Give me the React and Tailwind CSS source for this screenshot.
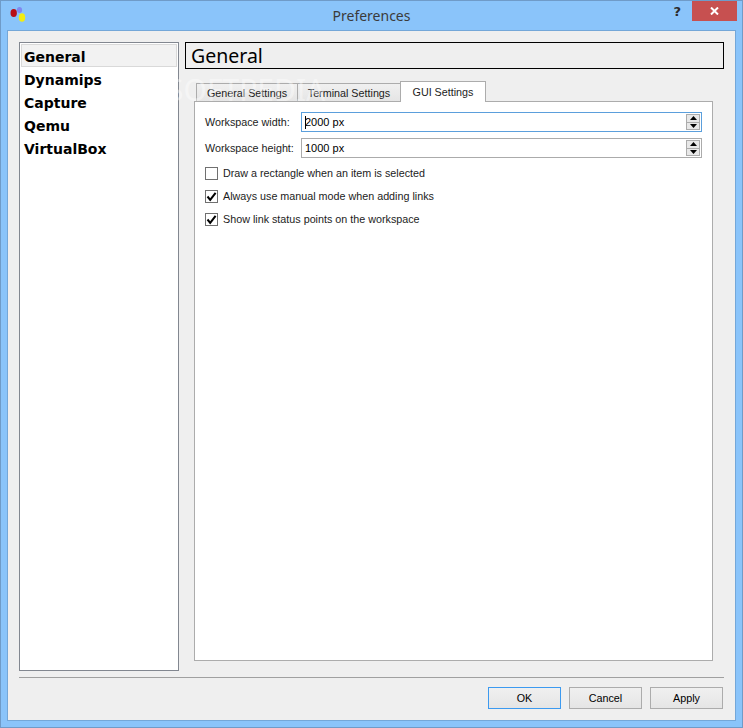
import React from "react";

const sidebarItems = ["General", "Dynamips", "Capture", "Qemu", "VirtualBox"];

const SpinBox = ({ value, focused }) => (
  <div
    className={`flex h-5 items-center border bg-white pl-[3px] pr-[1px] ${
      focused ? "border-[#5b9fdc]" : "border-[#ababab]"
    }`}
  >
    {focused && <span className="h-[13px] w-px bg-black" />}
    <span className={`flex-1 pt-px text-[11px] leading-none text-black ${focused ? "-ml-px" : ""}`}>
      {value}
    </span>
    <div className="flex w-[14px] flex-col gap-0 self-stretch py-px">
      <div className="flex flex-1 items-center justify-center border border-[#acacac] bg-[#e8e8e8]">
        <svg width="7" height="4" viewBox="0 0 7 4">
          <path d="M3.5 0 7 4H0z" fill="#000" />
        </svg>
      </div>
      <div className="flex flex-1 items-center justify-center border border-t-0 border-[#acacac] bg-[#e8e8e8]">
        <svg width="7" height="4" viewBox="0 0 7 4">
          <path d="M0 0h7L3.5 4z" fill="#000" />
        </svg>
      </div>
    </div>
  </div>
);

const CheckRow = ({ label, checked }) => (
  <div className="flex h-[13px] items-center gap-[5px]">
    <div className="flex h-[13px] w-[13px] items-center justify-center border border-[#707070] bg-white">
      {checked && (
        <svg width="11" height="11" viewBox="0 0 11 11">
          <path d="M1.5 5.5 4.2 8.8 9.6 1.8" fill="none" stroke="#000" strokeWidth="2" />
        </svg>
      )}
    </div>
    <span className="text-[10.75px] leading-none text-[#1c1c1c]">{label}</span>
  </div>
);

const DialogButton = ({ label, active }) => (
  <button
    className={`h-[22px] w-[73px] border bg-gradient-to-b from-[#f0f0f0] to-[#e5e5e5] text-[10.75px] text-black ${
      active ? "border-[#3c9af0]" : "border-[#acacac]"
    }`}
  >
    {label}
  </button>
);

export default function App() {
  return (
    <div
      className="relative flex h-[728px] w-[743px] flex-col overflow-hidden border border-[#6f9bc8] bg-[#8ac4fa] px-[6px] pb-[6px]"
      style={{ fontFamily: '"Liberation Sans", sans-serif' }}
    >
      {/* title bar */}
      <div className="relative flex h-[29px] shrink-0 items-center">
        <svg className="absolute left-[3px] top-[5px]" width="17" height="17" viewBox="0 0 17 17">
          <ellipse cx="9.5" cy="4" rx="2.6" ry="3" fill="#8088f0" />
          <ellipse cx="3.7" cy="7" rx="3.2" ry="4" fill="#b80f16" />
          <ellipse cx="12" cy="11.5" rx="3.2" ry="4.3" fill="#f2ec10" />
        </svg>
        <span
          className="flex-1 text-center text-[14px] text-[#3b3b3b]"
          style={{ fontFamily: '"Noto Sans", sans-serif' }}
        >
          Preferences
        </span>
        <span
          className="absolute right-[55px] top-[3px] text-[13px] font-bold leading-4 text-[#2b2b2b]"
          style={{ fontFamily: '"DejaVu Sans", sans-serif' }}
        >
          ?
        </span>
        <div className="absolute right-[-1px] top-0 flex h-[20px] w-[45px] items-center justify-center bg-[#c75050]">
          <svg width="9" height="8" viewBox="0 0 9 8">
            <path d="M1 .5 8 7.5M8 .5 1 7.5" stroke="#fff" strokeWidth="2" fill="none" />
          </svg>
        </div>
      </div>

      {/* client area */}
      <div className="flex min-h-0 flex-1 flex-col border border-[#74a7d8] bg-[#efefef] px-[11px] pb-[11px] pt-[11px]">
        <div className="flex min-h-0 flex-1 gap-[6px]">
          <div className="flex h-[629px] w-[160px] shrink-0 flex-col border border-[#828790] bg-white p-px">
            {sidebarItems.map((item, i) => (
              <div
                key={item}
                className={`flex h-[23px] items-center pt-[2px] text-[14px] font-bold leading-none text-black ${
                  i === 0 ? "border border-[#d9d9d9] bg-[#f2f2f2] pl-[2px]" : "pl-[3px]"
                }`}
                style={{ fontFamily: '"DejaVu Sans", sans-serif' }}
              >
                {item}
              </div>
            ))}
          </div>

          <div className="flex min-w-0 flex-1 flex-col">
            <div
              className="flex h-[27px] items-center border border-black px-[5px] text-[19.5px] leading-none text-black"
              style={{ fontFamily: '"Noto Sans", sans-serif' }}
            >
              General
            </div>
            <div className="mt-[12px] flex h-[20px] items-end pl-[11px]">
              <div className="flex h-[18px] w-[102px] items-center justify-center border border-b-0 border-[#acacac] bg-gradient-to-b from-[#f0f0f0] to-[#e5e5e5] pt-px text-[10.75px] leading-none text-[#1c1c1c]">
                General Settings
              </div>
              <div className="-ml-px flex h-[18px] w-[104px] items-center justify-center border border-b-0 border-[#acacac] bg-gradient-to-b from-[#f0f0f0] to-[#e5e5e5] pt-px text-[10.75px] leading-none text-[#1c1c1c]">
                Terminal Settings
              </div>
              <div className="relative z-10 -mb-px -ml-px flex h-[21px] w-[86px] items-center justify-center border border-b-0 border-[#acacac] bg-white text-[10.75px] leading-none text-[#1c1c1c]">
                GUI Settings
              </div>
            </div>
            <div className="ml-[9px] mr-[11px] flex h-[560px] flex-col border border-[#acacac] bg-white px-[10px] pt-[10px]">
              <div className="flex flex-col gap-[6px]">
                <div className="flex items-center">
                  <span className="w-[96px] pt-px text-[10.75px] leading-none text-[#1c1c1c]">Workspace width:</span>
                  <div className="flex-1">
                    <SpinBox value="2000 px" focused />
                  </div>
                </div>
                <div className="flex items-center">
                  <span className="w-[96px] pt-px text-[10.75px] leading-none text-[#1c1c1c]">Workspace height:</span>
                  <div className="flex-1">
                    <SpinBox value="1000 px" />
                  </div>
                </div>
              </div>
              <div className="mt-[9px] flex flex-col gap-[10px]">
                <CheckRow label="Draw a rectangle when an item is selected" />
                <CheckRow label="Always use manual mode when adding links" checked />
                <CheckRow label="Show link status points on the workspace" checked />
              </div>
            </div>
          </div>
        </div>

        {/* footer */}
        <div className="h-px shrink-0 bg-[#a0a0a0]" />
        <div className="flex shrink-0 justify-end gap-[8px] pr-px pt-[9px]">
          <DialogButton label="OK" active />
          <DialogButton label="Cancel" />
          <DialogButton label="Apply" />
        </div>
      </div>

      {/* watermark */}
      <span
        className="pointer-events-none absolute left-[166px] top-[74px] text-[30px] leading-none text-white/40"
        style={{ fontFamily: '"Noto Sans", sans-serif' }}
      >
        SOFTPEDIA
      </span>
    </div>
  );
}
